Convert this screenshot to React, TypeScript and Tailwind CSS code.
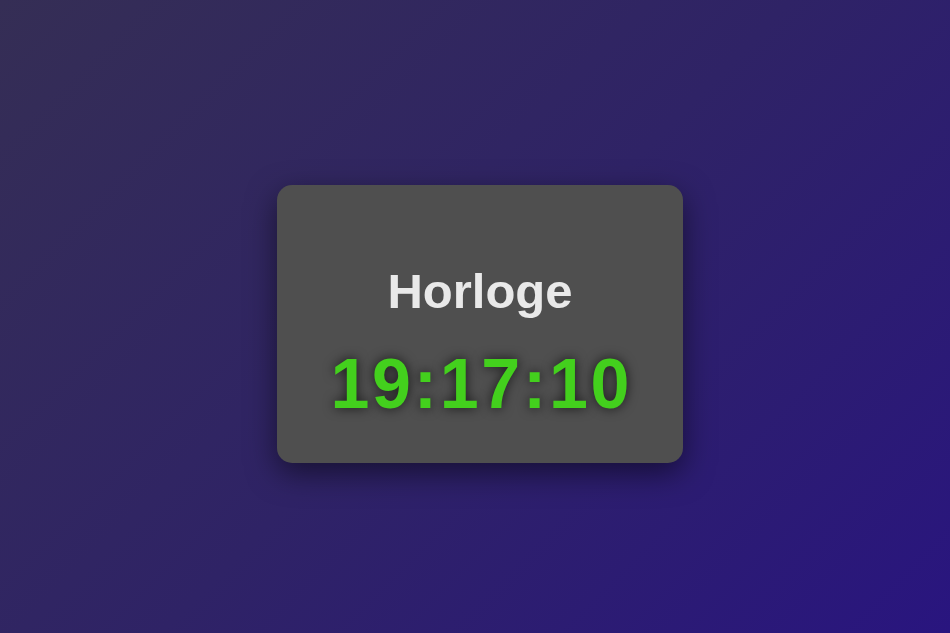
export default function App() {
  return (
    <div className="min-h-screen w-full flex items-center justify-center pl-[10px] pt-[15px] bg-[linear-gradient(135deg,#352e55_0%,#2f2366_50%,#29157f_100%)] font-['Liberation_Sans',Arial,sans-serif]">
      <div className="w-[406px] h-[278px] rounded-[15px] bg-[#4f4f4f] shadow-[0_10px_30px_rgba(0,0,0,0.5)] flex flex-col items-center pt-[78px] gap-[25px]">
        <h1 className="text-[49px] leading-[1.15] font-bold text-[#e9e9e9]">Horloge</h1>
        <div className="text-[70px] leading-[1.15] font-bold tracking-[2.7px] text-[#43d01d] [text-shadow:0_0_12px_rgba(0,0,0,0.7)] -mr-[2.7px]">
          19:17:10
        </div>
      </div>
    </div>
  );
}
